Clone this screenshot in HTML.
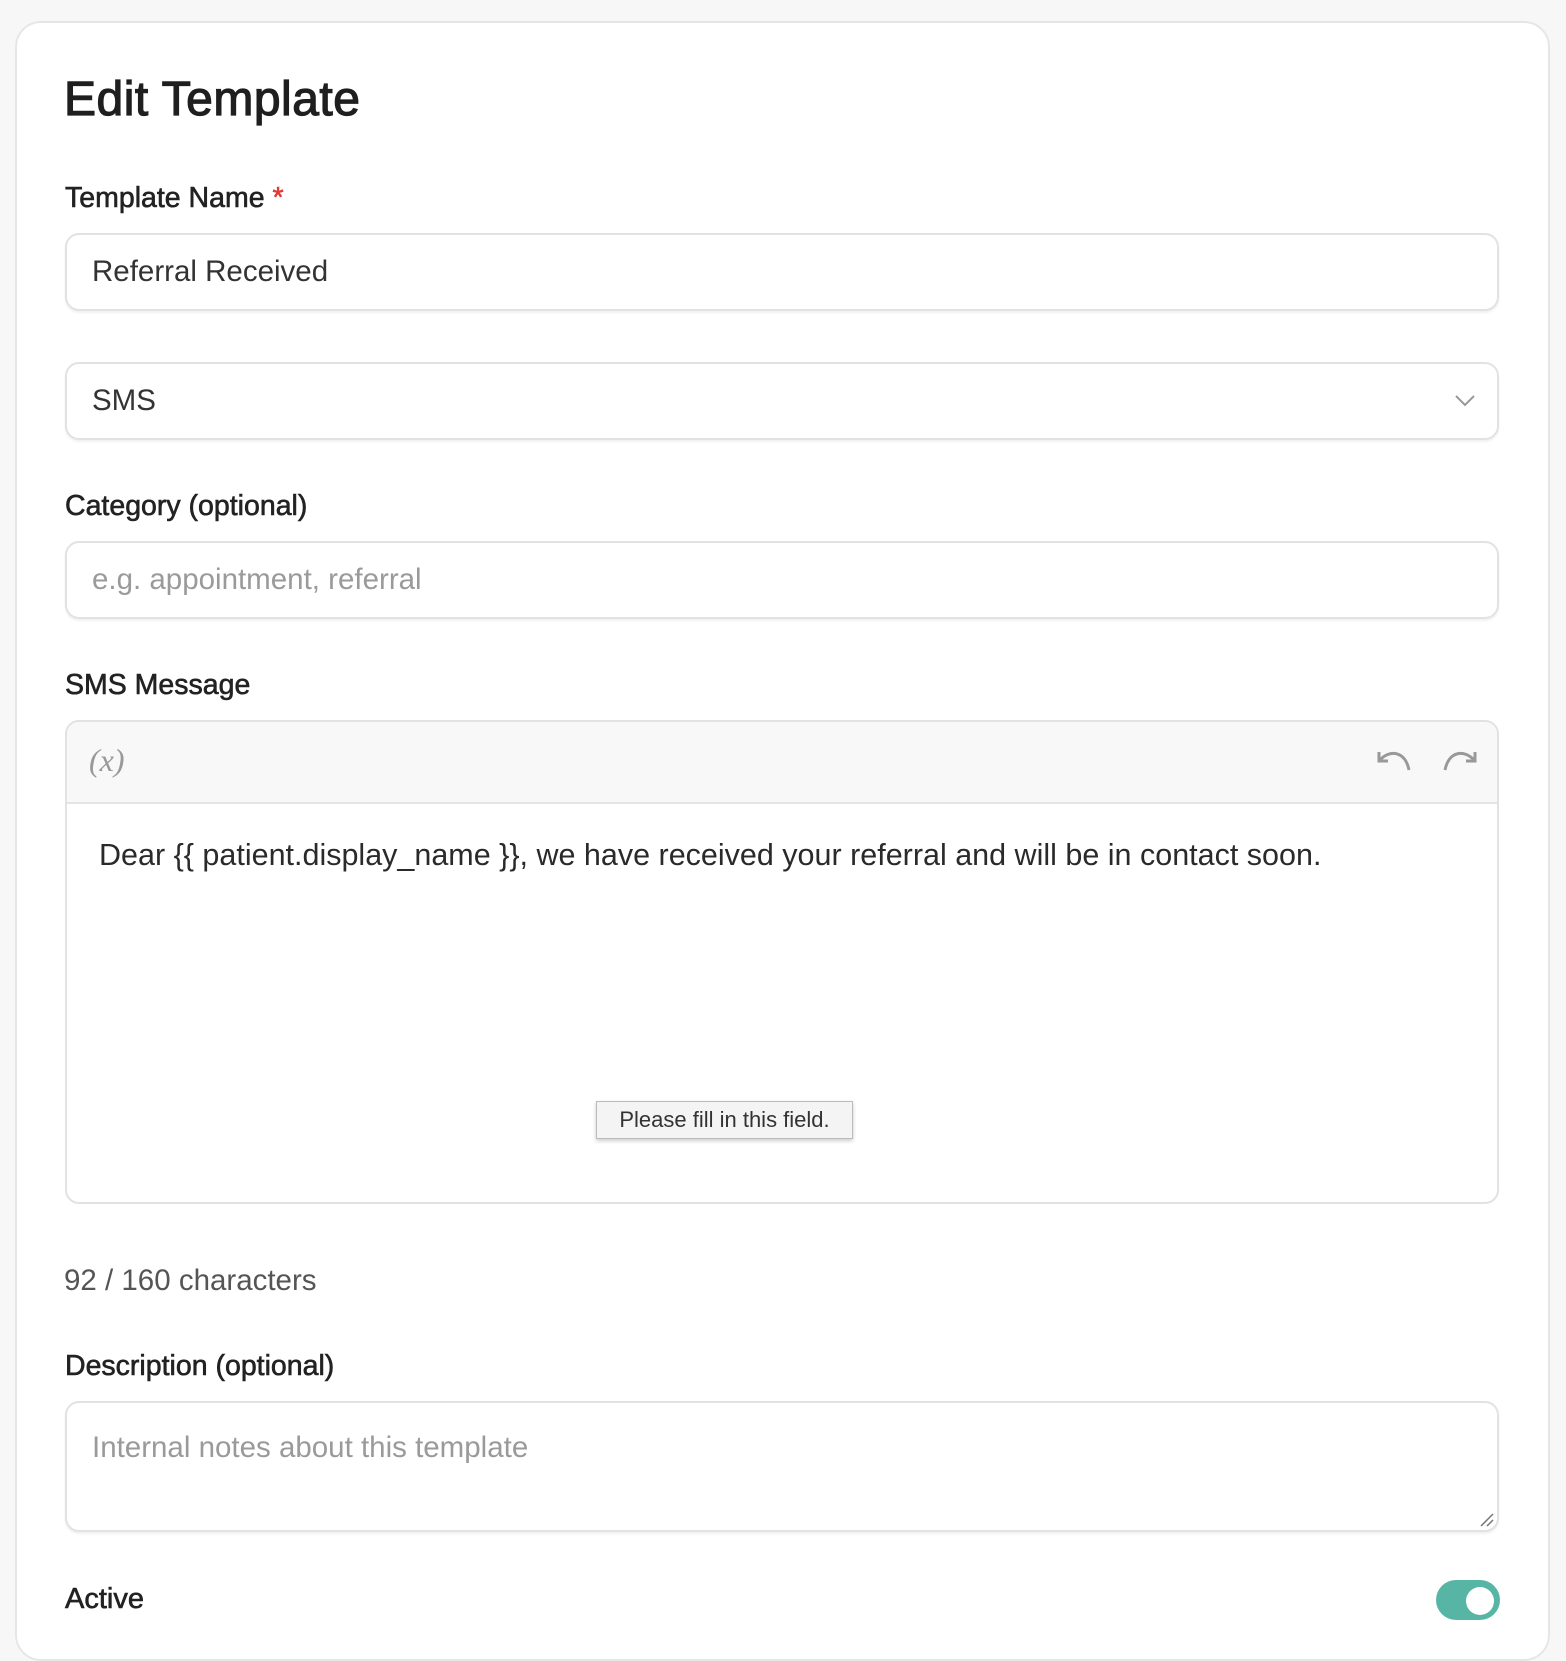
<!DOCTYPE html>
<html><head><meta charset="utf-8"><style>
*{box-sizing:border-box;margin:0;padding:0}
body{width:1566px;height:1610px;background:#f7f7f7;font-family:"Liberation Sans",sans-serif;color:#222;overflow:hidden;position:relative}
.card{position:absolute;left:15px;top:21px;width:1535px;height:1640px;background:#fff;border:2px solid #e6e6e6;border-radius:26px}
.a{position:absolute}
h1{position:absolute;left:64px;top:72px;font-size:48px;font-weight:500;color:#1f1f1f;-webkit-text-stroke:1.2px #1f1f1f;letter-spacing:0.5px}
.lbl{position:absolute;left:65px;font-size:28.5px;color:#222;-webkit-text-stroke:0.6px #222}
.inp{position:absolute;left:65px;width:1434px;height:78px;border:2px solid #e2e2e2;border-radius:14px;box-shadow:0 2px 2px rgba(0,0,0,.06);font-size:29.5px;padding-left:25px;line-height:74px;color:#333}
.ph{color:#9a9a9a}
</style></head><body>
<div class="card"></div>
<h1>Edit Template</h1>
<div class="lbl" style="top:182px">Template Name<span style="color:#e03b3b;-webkit-text-stroke:0.6px #e03b3b"> *</span></div>
<div class="inp" style="top:233px">Referral Received</div>
<div class="inp" style="top:362px">SMS
<svg class="a" style="right:20px;top:28px" width="24" height="16" viewBox="0 0 24 16"><path d="M3 4l9 9 9-9" fill="none" stroke="#999" stroke-width="2"/></svg></div>
<div class="lbl" style="top:490px">Category (optional)</div>
<div class="inp ph" style="top:541px"><span class="ph">e.g. appointment, referral</span></div>
<div class="lbl" style="top:669px">SMS Message</div>
<div class="a" style="left:65px;top:720px;width:1434px;height:484px;border:2px solid #e2e2e2;border-radius:14px;overflow:hidden">
 <div style="height:82px;background:#f8f8f8;border-bottom:2px solid #e4e4e4;position:relative">
  <span class="a" style="left:22px;top:20px;font-family:'Liberation Serif',serif;font-style:italic;font-size:32px;color:#999">(x)</span>
  <svg class="a" style="left:1310px;top:28px" width="36" height="24" viewBox="0 0 36 24"><path d="M3 10C12 0 28 0 32 20" fill="none" stroke="#999" stroke-width="3"/><path d="M2 2v9h9" fill="none" stroke="#999" stroke-width="3"/></svg>
  <svg class="a" style="left:1374px;top:28px" width="36" height="24" viewBox="0 0 36 24"><path d="M33 10C24 0 8 0 4 20" fill="none" stroke="#999" stroke-width="3"/><path d="M34 2v9h-9" fill="none" stroke="#999" stroke-width="3"/></svg>
 </div>
 <div style="padding:34px 32px;font-size:30.5px;color:#2a2a2a">Dear {{ patient.display_name }}, we have received your referral and will be in contact soon.</div>
</div>
<div class="a" style="left:596px;top:1101px;width:257px;height:38px;background:#f4f4f4;border:1px solid #bbb;box-shadow:0 2px 4px rgba(0,0,0,.2);font-size:22px;line-height:36px;text-align:center;color:#333">Please fill in this field.</div>
<div class="a" style="left:64px;top:1264px;font-size:29.5px;color:#555">92 / 160 characters</div>
<div class="lbl" style="top:1350px">Description (optional)</div>
<div class="inp" style="top:1401px;height:131px;line-height:normal;padding-top:28px"><span class="ph">Internal notes about this template</span>
<svg class="a" style="right:2px;bottom:2px" width="16" height="16" viewBox="0 0 16 16"><path d="M2 14L14 2M8 14L14 8" stroke="#777" stroke-width="1.5"/></svg></div>
<div class="lbl" style="top:1583px;font-size:29px">Active</div>
<div class="a" style="left:1436px;top:1580px;width:64px;height:40px;border-radius:20px;background:#57b5a5"><div class="a" style="left:30px;top:7px;width:28px;height:28px;border-radius:50%;background:#fff"></div></div>
</body></html>
